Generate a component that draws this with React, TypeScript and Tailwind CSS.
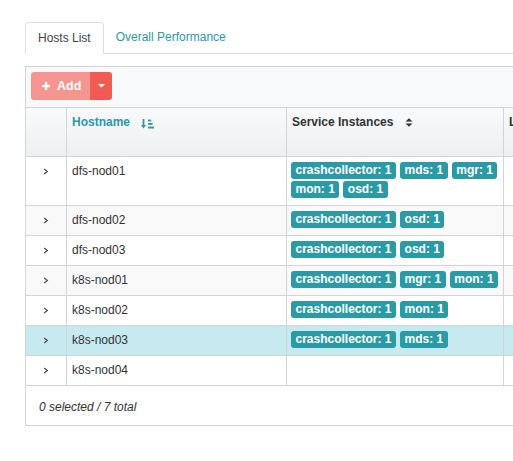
const hosts = [
  { name: "dfs-nod01", services: ["crashcollector: 1", "mds: 1", "mgr: 1", "mon: 1", "osd: 1"] },
  { name: "dfs-nod02", services: ["crashcollector: 1", "osd: 1"] },
  { name: "dfs-nod03", services: ["crashcollector: 1", "osd: 1"] },
  { name: "k8s-nod01", services: ["crashcollector: 1", "mgr: 1", "mon: 1"] },
  { name: "k8s-nod02", services: ["crashcollector: 1", "mon: 1"] },
  { name: "k8s-nod03", services: ["crashcollector: 1", "mds: 1"], selected: true },
  { name: "k8s-nod04", services: [] as string[] },
];

function SortAmountIcon() {
  return (
    <svg width="13" height="10" viewBox="0 0 13 10" className="text-[#2b99a8]">
      <path d="M2.5 0V7.5" stroke="currentColor" strokeWidth="1.8" fill="none" />
      <path d="M0 6L2.5 9.6L5 6Z" fill="currentColor" />
      <rect x="7" y="0.6" width="3.2" height="1.8" fill="currentColor" />
      <rect x="7" y="4" width="4.6" height="1.8" fill="currentColor" />
      <rect x="7" y="7.6" width="6" height="1.9" fill="currentColor" />
    </svg>
  );
}

function SortIcon() {
  return (
    <svg width="8" height="9" viewBox="0 0 8 9" className="text-[#333]">
      <path d="M0.5 3.6L4 0.2L7.5 3.6Z" fill="currentColor" />
      <path d="M0.5 5.4L4 8.8L7.5 5.4Z" fill="currentColor" />
    </svg>
  );
}

function Chevron() {
  return (
    <svg width="6" height="7" viewBox="0 0 6 7">
      <polyline points="1.2,1 4.4,3.5 1.2,6" fill="none" stroke="#444" strokeWidth="1.1" />
    </svg>
  );
}

function Badge({ label }: { label: string }) {
  return (
    <span className="h-[17px] rounded-[3px] bg-[#2b9aa7] px-[4.5px] text-[12px] font-bold leading-[17px] text-white whitespace-nowrap">
      {label}
    </span>
  );
}

export default function App() {
  return (
    <div className="h-[461px] w-[513px] overflow-hidden bg-white font-['Liberation_Sans',Arial,sans-serif] text-[12px] text-[#333]">
      <div className="pl-[25px] pt-[22px]">
        {/* tabs */}
        <div className="flex w-[700px] border-b border-[#dddddd]">
          <div className="-mb-px h-[32px] rounded-t-[4px] border border-[#dddddd] border-b-white bg-white px-[12px] leading-[30px] text-[#444]">
            Hosts List
          </div>
          <div className="px-[12px] leading-[31px] text-[#2b99a8]">Overall Performance</div>
        </div>

        {/* table */}
        <div className="mt-[12px] w-[700px] border-l border-t border-[#d1d5da]">
          <div className="h-[41px] border-b border-[#d1d5da] bg-[#f8f9fa] pl-[5px] pt-[5px]">
            <div className="flex h-[28px] w-[81px] overflow-hidden rounded-[3px]">
              <div className="flex w-[59px] items-center gap-[7px] bg-[#f4968f] pl-[11px] text-[12.5px] font-bold text-white">
                <svg width="8" height="8" viewBox="0 0 8 8">
                  <rect x="2.9" y="0" width="2.3" height="8" fill="white" />
                  <rect x="0" y="2.9" width="8" height="2.3" fill="white" />
                </svg>
                <span>Add</span>
              </div>
              <div className="flex flex-1 items-center justify-center bg-[#f05c53]">
                <svg width="7" height="4" viewBox="0 0 7 4">
                  <path d="M0 0H7L3.5 3.6Z" fill="white" />
                </svg>
              </div>
            </div>
          </div>

          {/* header */}
          <div className="flex h-[49px] border-b border-[#d1d5da] bg-linear-to-b from-[#f9fafb] to-[#edeff1] font-bold leading-[18px]">
            <div className="w-[41px] border-r border-[#d1d5da]" />
            <div className="flex w-[220px] items-start gap-[11px] border-r border-[#d1d5da] px-[5px] pt-[5px] text-[#2b99a8]">
              <span>Hostname</span>
              <span className="pt-[6px]">
                <SortAmountIcon />
              </span>
            </div>
            <div className="flex w-[217px] items-start gap-[12px] border-r border-[#d1d5da] px-[5px] pt-[5px]">
              <span>Service Instances</span>
              <span className="pt-[5px]">
                <SortIcon />
              </span>
            </div>
            <div className="flex-1 px-[5px] pt-[5px]">Labels</div>
          </div>

          {/* rows */}
          {hosts.map((h, i) => (
            <div
              key={h.name}
              className={`flex border-b border-[#d1d5da] leading-[18px] ${i === 0 ? "h-[49px]" : "h-[30px]"} ${
                h.selected ? "bg-[#c7eaf0]" : i % 2 === 1 ? "bg-[#f9f9fa]" : "bg-white"
              }`}
            >
              <div className="flex w-[41px] justify-center border-r border-[#d1d5da] pt-[11px]">
                <span className="h-[7px]">
                  <Chevron />
                </span>
              </div>
              <div className="w-[220px] border-r border-[#d1d5da] px-[5px] pt-[5px]">{h.name}</div>
              <div className="flex w-[217px] flex-wrap content-start gap-x-[4px] gap-y-[2px] border-r border-[#d1d5da] pl-[4px] pr-[3px] pt-[5px]">
                {h.services.map((s) => (
                  <Badge key={s} label={s} />
                ))}
              </div>
              <div className="flex-1" />
            </div>
          ))}

          {/* footer */}
          <div className="h-[40px] border-b border-[#d1d5da] pl-[13px] pt-[12px] italic leading-[18px]">
            0 selected / 7 total
          </div>
        </div>
      </div>
    </div>
  );
}
